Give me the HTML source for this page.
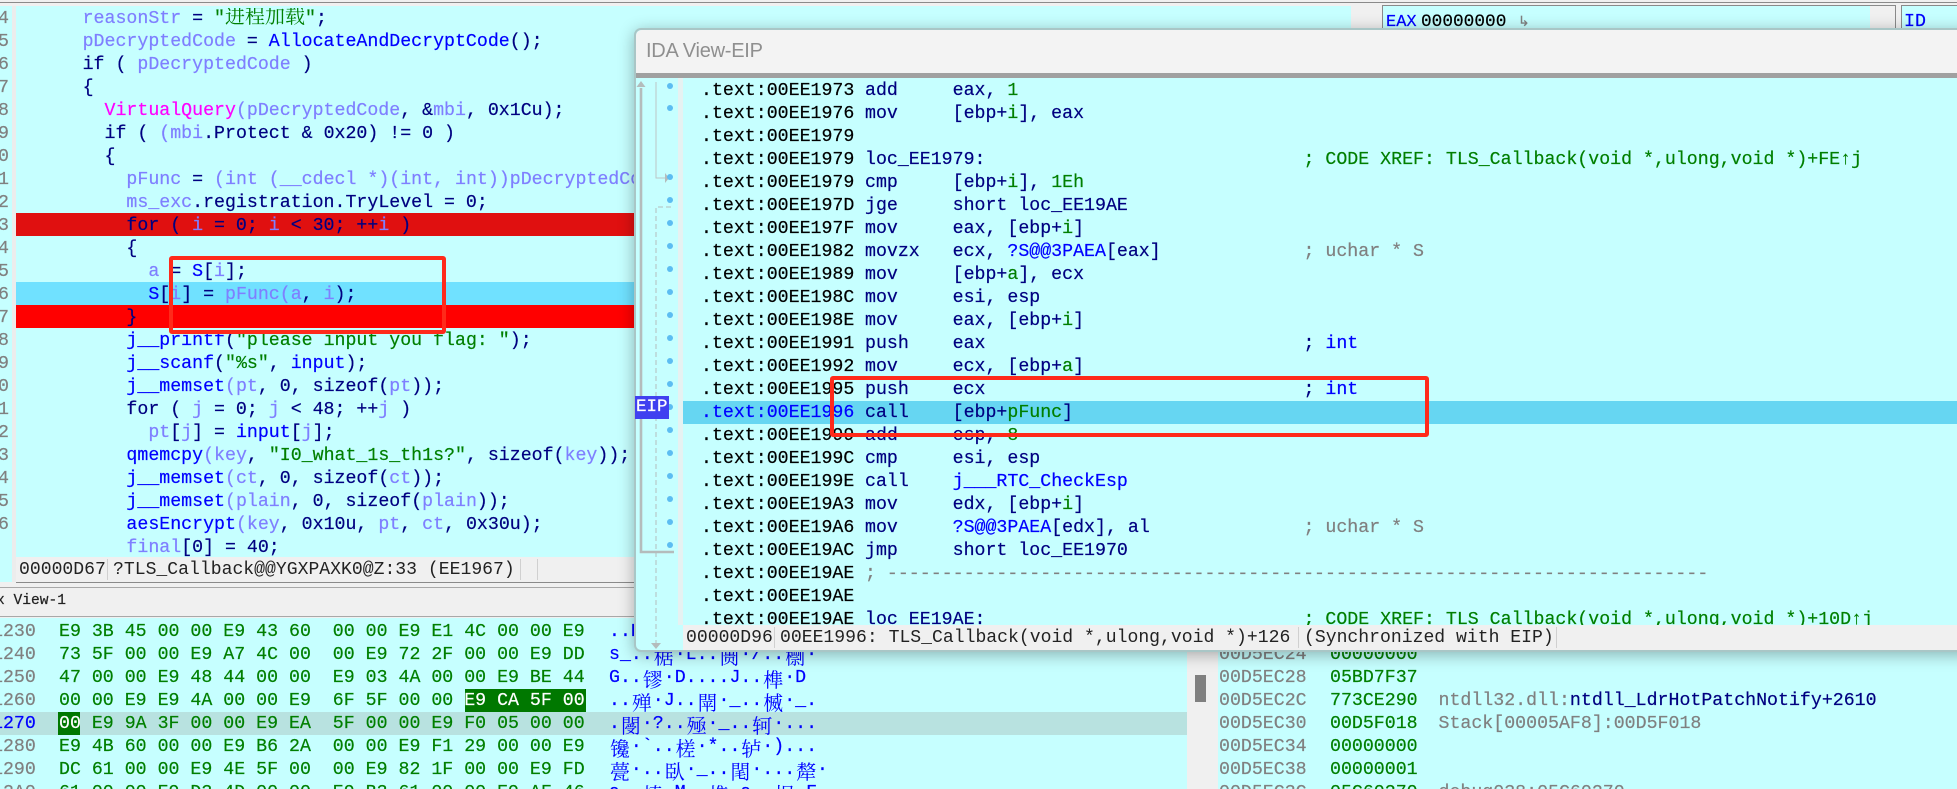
<!DOCTYPE html>
<html><head><meta charset="utf-8"><title>IDA</title>
<style>
html,body{margin:0;padding:0;width:1957px;height:789px;overflow:hidden;background:#f0f0f0}
div,pre{position:absolute;margin:0;padding:0}
pre{font-family:"Liberation Mono","Noto Serif CJK SC",monospace;font-size:18.25px;line-height:23px;white-space:pre;overflow:hidden;-webkit-text-stroke:.2px}
.v{color:#7f7fff}.n{color:#000080}.f{color:#0000ff}.p{color:#ff00ff}.s{color:#007f00}.k{color:#000}.g{color:#808080}
b{font-weight:normal}
u{text-decoration:none;display:inline-block;width:21.9px;height:23px;vertical-align:top;font-family:"Noto Serif CJK SC",serif;font-size:20px;line-height:23px;text-align:center;-webkit-text-stroke:0}
.st{font-family:"Liberation Mono",monospace;font-size:18.1px;line-height:25px;color:#222;white-space:pre}
.sep{width:1px;background:#d0d0d0}
</style></head><body>

<!-- top strip -->
<div style="left:0;top:2px;width:1957px;height:1px;background:#8a8a8a"></div>
<div style="left:0;top:6px;width:1351px;height:551px;background:#c6ffff"></div>
<div style="left:0;top:557px;width:16px;height:25px;background:#c6ffff"></div>
<div style="left:12px;top:6px;width:4px;height:576px;background:#ececec"></div>
<div style="left:1351px;top:6px;width:26px;height:30px;background:#f0f0f0"></div>
<div style="left:1382px;top:5px;width:514px;height:30px;background:#c6ffff;border:1px solid #8a8a8a;box-sizing:border-box"></div>
<div style="left:1870px;top:6px;width:25px;height:30px;background:#f0f0f0"></div>
<div style="left:1901px;top:5px;width:60px;height:30px;background:#c6ffff;border:1px solid #8a8a8a;box-sizing:border-box"></div>
<pre style="left:1386px;top:11px;width:36px;height:17px;color:#0000ff;font-size:17px">EAX</pre>
<pre style="left:1421px;top:11px;width:100px;height:17px;color:#000;font-size:17.8px">00000000</pre>
<pre style="left:1518px;top:11px;width:20px;height:17px;color:#808080;font-size:14px;font-family:'DejaVu Sans',sans-serif">↳</pre>
<pre style="left:1904px;top:11px;width:53px;height:17px;color:#0000ff">ID   <span style="color:#000">0</span></pre>

<!-- left pseudocode rows -->
<div style="left:16px;top:213px;width:620px;height:23px;background:#e01010"></div>
<div style="left:16px;top:282px;width:620px;height:23px;background:#70e1ff"></div>
<div style="left:16px;top:305px;width:620px;height:23px;background:#ff0000"></div>

<pre style="left:-2px;top:8px;width:11px;height:530px;color:#808080;text-align:right">4
5
6
7
8
9
0
1
2
3
4
5
6
7
8
9
0
1
2
3
4
5
6</pre>
<pre style="left:38.8px;top:8px;width:600px;height:549px;color:#000080">    <b class="v">reasonStr</b> = <b class="s">"<span style="font-family:'Noto Serif CJK SC',serif;font-size:20px;line-height:0;-webkit-text-stroke:0">进程加载</span>"</b>;
    <b class="v">pDecryptedCode</b> = <b class="f">AllocateAndDecryptCode</b>();
    if ( <b class="v">pDecryptedCode</b> )
    {
      <b class="p">VirtualQuery</b><b class="v">(pDecryptedCode</b>, &amp;<b class="v">mbi</b>, 0x1Cu);
      if ( <b class="v">(mbi</b>.Protect &amp; 0x20) != 0 )
      {
        <b class="v">pFunc</b> = <b class="v">(int (__cdecl *)(int, int))pDecryptedCode</b>
        <b class="v">ms_exc</b>.registration.TryLevel = 0;
        for ( <b class="v">i</b> = 0; <b class="v">i</b> &lt; 30; ++<b class="v">i</b> )
        {
          <b class="v">a</b> = <b class="f">S</b>[<b class="v">i</b>];
          <b class="f">S</b>[<b class="v">i</b>] = <b class="v">pFunc(a</b>, <b class="v">i</b>);
        }
        <b class="f">j__printf</b>(<b class="s">"please input you flag: "</b>);
        <b class="f">j__scanf</b>(<b class="s">"%s"</b>, <b class="f">input</b>);
        <b class="f">j__memset</b><b class="v">(pt</b>, 0, sizeof(<b class="v">pt</b>));
        for ( <b class="v">j</b> = 0; <b class="v">j</b> &lt; 48; ++<b class="v">j</b> )
          <b class="v">pt</b>[<b class="v">j</b>] = <b class="f">input</b>[<b class="v">j</b>];
        <b class="f">qmemcpy</b><b class="v">(key</b>, <b class="s">"I0_what_1s_th1s?"</b>, sizeof(<b class="v">key</b>));
        <b class="f">j__memset</b><b class="v">(ct</b>, 0, sizeof(<b class="v">ct</b>));
        <b class="f">j__memset</b><b class="v">(plain</b>, 0, sizeof(<b class="v">plain</b>));
        <b class="f">aesEncrypt</b><b class="v">(key</b>, 0x10u, <b class="v">pt</b>, <b class="v">ct</b>, 0x30u);
        <b class="v">final</b>[0] = 40;</pre>

<!-- left status -->
<div style="left:16px;top:557px;width:620px;height:25px;background:#f0f0f0"></div>
<div class="st" style="left:19px;top:558px">00000D67</div>
<div class="sep" style="left:107px;top:559px;height:21px"></div>
<div class="st" style="left:113px;top:558px">?TLS_Callback@@YGXPAXK0@Z:33 (EE1967)</div>
<div class="sep" style="left:520px;top:559px;height:21px"></div>
<div class="sep" style="left:537px;top:559px;height:21px"></div>
<div style="left:16px;top:582px;width:1941px;height:1px;background:#8a8a8a"></div>
<div style="left:0;top:587px;width:1957px;height:1px;background:#a8a8a8"></div>
<div style="left:0;top:616px;width:1957px;height:1px;background:#a8a8a8"></div>
<pre style="left:-4px;top:590px;width:90px;height:24px;font-size:14.6px;color:#222">x View-1</pre>

<!-- hex view -->
<div style="left:0;top:618px;width:1187px;height:171px;background:#c6ffff"></div>
<div style="left:0;top:712px;width:1187px;height:23px;background:#b8e2e0"></div>
<div style="left:465px;top:689px;width:121px;height:23px;background:#007800"></div>
<div style="left:58px;top:712px;width:22px;height:23px;background:#007800"></div>
<div style="left:1187px;top:618px;width:31px;height:171px;background:#f0f0f0"></div>
<div style="left:1195px;top:675px;width:11px;height:27px;background:#808080"></div>
<div style="left:1218px;top:618px;width:739px;height:171px;background:#c6ffff"></div>

<pre style="left:-8px;top:621px;width:50px;height:168px;color:#808080">1230
1240
1250
1260
<span style="color:#0000ff">1270</span>
1280
1290
12A0</pre>
<pre style="left:59px;top:621px;width:540px;height:168px;color:#007f00">E9 3B 45 00 00 E9 43 60  00 00 E9 E1 4C 00 00 E9
73 5F 00 00 E9 A7 4C 00  00 E9 72 2F 00 00 E9 DD
47 00 00 E9 48 44 00 00  E9 03 4A 00 00 E9 BE 44
00 00 E9 E9 4A 00 00 E9  6F 5F 00 00 <span style="color:#fff">E9 CA 5F 00</span>
<span style="color:#fff">00</span> E9 9A 3F 00 00 E9 EA  5F 00 00 E9 F0 05 00 00
E9 4B 60 00 00 E9 B6 2A  00 00 E9 F1 29 00 00 E9
DC 61 00 00 E9 4E 5F 00  00 E9 82 1F 00 00 E9 FD
61 00 00 E9 D3 4D 00 00  E9 B3 61 00 00 E9 AF 46</pre>
<pre style="left:609px;top:621px;width:230px;height:168px;color:#0000ff">..E
s_..<u>椐</u>·L..<u>阓</u>·/..<u>檦</u>·
G..<u>镠</u>·D....J..<u>榫</u>·D
..<u>殚</u>·J..<u>閛</u>·_..<u>楲</u>·_.
.<u>閿</u>·?..<u>殛</u>·_..<u>轲</u>·...
<u>镵</u>·`..<u>槎</u>·*..<u>轳</u>·)...
<u>甍</u>·..<u>臥</u>·_..<u>閐</u>·...<u>犛</u>·
a..<u>搷</u>·M..<u>榫</u>·a..<u>棍</u>·F</pre>

<!-- stack -->
<pre style="left:1219px;top:621px;width:110px;height:168px;color:#808080">00D5EC20
00D5EC24
00D5EC28
00D5EC2C
00D5EC30
00D5EC34
00D5EC38
00D5EC3C</pre>
<pre style="left:1330px;top:621px;width:100px;height:168px;color:#007f00">00000000
00000000
05BD7F37
773CE290
00D5F018
00000000
00000001
05C60270</pre>
<pre style="left:1438.5px;top:621px;width:518px;height:168px;color:#808080">



ntdll32.dll:<b class="n">ntdll_LdrHotPatchNotify+2610</b>
Stack[00005AF8]:00D5F018


debug038:05C60270</pre>

<!-- red box left -->
<div style="left:169px;top:256px;width:277px;height:78px;box-sizing:border-box;border:4px solid #ff2a1a;border-radius:3px;z-index:3"></div>

<!-- Window -->
<div style="left:634px;top:28px;width:1340px;height:624px;box-sizing:border-box;border:2px solid #a9c6c6;border-radius:7px 0 0 7px;background:#c6ffff;box-shadow:0 3px 16px rgba(0,0,0,.3);z-index:4"></div>
<div style="z-index:5;left:0;top:0;width:1957px;height:789px;overflow:hidden">
  <div style="left:636px;top:30px;width:1321px;height:43px;background:#f3f3f3;border-radius:6px 0 0 0"></div>
  <div style="left:646px;top:38px;font:20px/26px 'Liberation Sans',sans-serif;color:#8f8f8f;letter-spacing:-.25px;white-space:pre">IDA View-EIP</div>
  <div style="left:636px;top:73px;width:1321px;height:5px;background:#a0a0a0"></div>
  <div style="left:678px;top:78px;width:5px;height:547px;background:#e6f2f2"></div>
  <div style="left:683px;top:401px;width:1274px;height:23px;background:#66d6f2"></div>

  <svg style="position:absolute;left:636px;top:78px" width="46" height="574" viewBox="636 78 46 574">
    <path d="M641 88V552H674" fill="none" stroke="#b4bcbc" stroke-width="2.6"/>
    <path d="M641 81l-4.5 6h9z" fill="#b4bcbc"/>
    <path d="M656 82V178H666" fill="none" stroke="#bcc6c6" stroke-width="1"/>
    <path d="M665 173l4 5-4 5z" fill="#b4bcbc"/>
    <path d="M671 207H656V643" fill="none" stroke="#b4bcbc" stroke-width="1" stroke-dasharray="5 3"/>
    <path d="M651 643h10l-5 6z" fill="#b4bcbc"/>
    <g fill="#5cbdf2">
      <circle cx="670" cy="86" r="3"/><circle cx="670" cy="108" r="3"/>
      <circle cx="670" cy="177" r="3"/><circle cx="670" cy="200" r="3"/>
      <circle cx="670" cy="223" r="3"/><circle cx="670" cy="246" r="3"/>
      <circle cx="670" cy="269" r="3"/><circle cx="670" cy="292" r="3"/>
      <circle cx="670" cy="315" r="3"/><circle cx="670" cy="338" r="3"/>
      <circle cx="670" cy="361" r="3"/><circle cx="670" cy="384" r="3"/>
      <circle cx="670" cy="407" r="3"/><circle cx="670" cy="430" r="3"/>
      <circle cx="670" cy="453" r="3"/><circle cx="670" cy="476" r="3"/>
      <circle cx="670" cy="499" r="3"/><circle cx="670" cy="522" r="3"/>
      <circle cx="670" cy="545" r="3"/>
    </g>
  </svg>
  <div style="left:635px;top:396px;width:34px;height:23px;background:#4040f0"></div>
  <pre style="left:636px;top:396px;width:34px;height:23px;color:#fff;font-size:17.5px">EIP</pre>

  <pre style="left:701px;top:80px;width:160px;height:545px;color:#000">.text:00EE1973
.text:00EE1976
.text:00EE1979
.text:00EE1979
.text:00EE1979
.text:00EE197D
.text:00EE197F
.text:00EE1982
.text:00EE1989
.text:00EE198C
.text:00EE198E
.text:00EE1991
.text:00EE1992
.text:00EE1995
<span style="color:#0000ff">.text:00EE1996</span>
.text:00EE1999
.text:00EE199C
.text:00EE199E
.text:00EE19A3
.text:00EE19A6
.text:00EE19AC
.text:00EE19AE
.text:00EE19AE
.text:00EE19AE</pre>
  <pre style="left:865px;top:80px;width:860px;height:545px;color:#000080">add     eax, <b class="s">1</b>
mov     [ebp+<b class="s">i</b>], eax

loc_EE1979:
cmp     [ebp+<b class="s">i</b>], <b class="s">1Eh</b>
jge     short loc_EE19AE
mov     eax, [ebp+<b class="s">i</b>]
movzx   ecx, <b class="f">?S@@3PAEA</b>[eax]
mov     [ebp+<b class="s">a</b>], ecx
mov     esi, esp
mov     eax, [ebp+<b class="s">i</b>]
push    eax
mov     ecx, [ebp+<b class="s">a</b>]
push    ecx
call    [ebp+<b class="s">pFunc</b>]
add     esp, <b class="s">8</b>
cmp     esi, esp
call    <b class="f">j___RTC_CheckEsp</b>
mov     edx, [ebp+<b class="s">i</b>]
mov     <b class="f">?S@@3PAEA</b>[edx], al
jmp     short loc_EE1970
<b class="g">; ---------------------------------------------------------------------------</b>

loc_EE19AE:</pre>
  <pre style="left:1303.5px;top:80px;width:653px;height:545px;color:#000080">



<b class="s">; CODE XREF: TLS_Callback(void *,ulong,void *)+FE↑j</b>



<b class="g">; uchar * S</b>



; <b class="f">int</b>

; <b class="f">int</b>





<b class="g">; uchar * S</b>



<b class="s">; CODE XREF: TLS_Callback(void *,ulong,void *)+10D↑j</b></pre>

  <div style="left:683px;top:625px;width:1274px;height:25px;background:#f0f0f0"></div>
  <div class="st" style="left:686px;top:626px">00000D96</div>
  <div class="sep" style="left:774px;top:627px;height:21px"></div>
  <div class="st" style="left:780px;top:626px">00EE1996: TLS_Callback(void *,ulong,void *)+126</div>
  <div class="sep" style="left:1298px;top:627px;height:21px"></div>
  <div class="st" style="left:1304px;top:626px">(Synchronized with EIP)</div>
  <div class="sep" style="left:1556px;top:627px;height:21px"></div>

  <div style="left:830px;top:376px;width:599px;height:61px;box-sizing:border-box;border:4px solid #ff2a1a;border-radius:3px"></div>
</div>
</body></html>
